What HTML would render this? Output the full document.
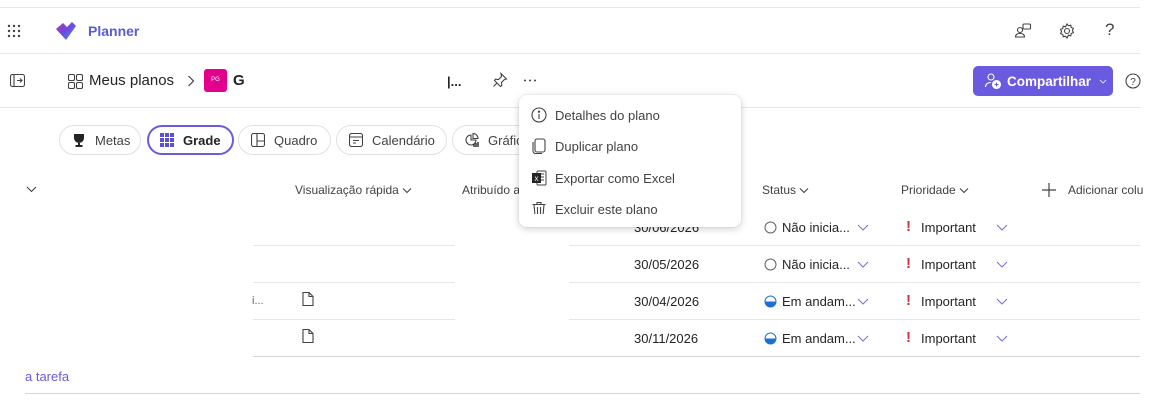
<!DOCTYPE html>
<html><head><meta charset="utf-8"><style>
*{margin:0;padding:0;box-sizing:border-box}
body{width:1165px;height:414px;background:#fff;font-family:"Liberation Sans",sans-serif;color:#242424;position:relative;overflow:hidden}
.a{position:absolute;white-space:nowrap}
.hl{position:absolute;height:1px;background:#e6e6e6}
.pill{position:absolute;top:125px;height:30px;border:1px solid #e0e0e0;border-radius:15px;font-size:13px;color:#424242;display:flex;align-items:center;padding-left:12px;gap:9px;background:#fff}
.hdr{font-size:12px;color:#424242}
.cell{font-size:13px;color:#242424}
.cv{display:inline-block;vertical-align:middle;margin-left:3px}
.menu{position:absolute;left:519px;top:95px;width:222px;height:132px;background:#fff;border-radius:8px;box-shadow:0 2px 8px rgba(0,0,0,.18),0 0 2px rgba(0,0,0,.1);overflow:hidden}
.mi{position:absolute;left:12px;font-size:13px;color:#424242;display:flex;align-items:center;gap:8px}
</style></head><body>
<div class="hl" style="left:0;top:7px;width:1140px"></div>
<div class="hl" style="left:0;top:53px;width:1140px"></div>
<div class="hl" style="left:0;top:107px;width:1140px"></div>
<svg class="a" style="left:7px;top:24px" width="14" height="14"><g fill="#424242"><circle cx="2" cy="2" r="1.2"/><circle cx="7" cy="2" r="1.2"/><circle cx="12" cy="2" r="1.2"/><circle cx="2" cy="7" r="1.2"/><circle cx="7" cy="7" r="1.2"/><circle cx="12" cy="7" r="1.2"/><circle cx="2" cy="12" r="1.2"/><circle cx="7" cy="12" r="1.2"/><circle cx="12" cy="12" r="1.2"/></g></svg>
<svg class="a" style="left:54px;top:20px" width="24" height="22"><defs><linearGradient id="g" x1="0" y1="0" x2="1" y2="1"><stop offset="0" stop-color="#b82fb8"/><stop offset=".5" stop-color="#6b4be0"/><stop offset="1" stop-color="#3a9ff0"/></linearGradient></defs><path d="M2 9 L9 3 L13 7 L18 2 L22 6 L12 20 Z" fill="url(#g)"/></svg>
<div class="a" style="left:88px;top:23px;font-size:14px;font-weight:bold;color:#5b5bd6">Planner</div>
<svg class="a" style="left:1014px;top:22px" width="18" height="18" fill="none" stroke="#424242" stroke-width="1.1"><circle cx="6" cy="8" r="2.5"/><path d="M1.5 15c0-2.5 2-3.5 4.5-3.5s4.5 1 4.5 3.5z"/><rect x="9" y="2" width="7.5" height="5" rx="1"/></svg>
<svg class="a" style="left:1058px;top:22px" width="18" height="18" fill="none" stroke="#424242" stroke-width="1.1"><circle cx="9" cy="9" r="2.5"/><path d="M9 2l1.5 1.8 2.3-.6.4 2.3 2.2.9-1 2.1 1 2.1-2.2.9-.4 2.3-2.3-.6L9 16l-1.5-1.8-2.3.6-.4-2.3-2.2-.9 1-2.1-1-2.1 2.2-.9.4-2.3 2.3.6z"/></svg>
<div class="a" style="left:1105px;top:20px;font-size:17px;color:#424242">?</div>
<svg class="a" style="left:10px;top:74px" width="15" height="13" fill="none" stroke="#424242" stroke-width="1.1"><rect x=".5" y=".5" width="14" height="12" rx="2"/><path d="M4 1v11M7 6.5h5M10 4.5l2 2-2 2"/></svg>
<svg class="a" style="left:68px;top:74px" width="15" height="15" fill="none" stroke="#424242" stroke-width="1.1"><rect x=".5" y=".5" width="6" height="6" rx="1.5"/><rect x="8.5" y=".5" width="6" height="6" rx="1.5"/><rect x=".5" y="8.5" width="6" height="6" rx="1.5"/><rect x="8.5" y="8.5" width="6" height="6" rx="1.5"/></svg>
<div class="a" style="left:89px;top:72px;font-size:15px;color:#242424">Meus planos</div>
<svg class="a" style="left:187px;top:75px" width="8" height="12" fill="none" stroke="#424242" stroke-width="1.2"><path d="M1.5 1l5 5-5 5"/></svg>
<div class="a" style="left:204px;top:69px;width:23px;height:23px;background:#e3008c;border-radius:3px;color:#fff;font-size:6px;line-height:23px;text-align:center">PG</div>
<div class="a" style="left:233px;top:72px;font-size:15px;font-weight:bold">G</div>
<div class="a" style="left:447px;top:74px;font-size:13px;font-weight:bold">|...</div>
<svg class="a" style="left:492px;top:72px" width="16" height="16" fill="none" stroke="#424242" stroke-width="1.1"><path d="M9 1.5l5.5 5.5-2 .5-3 3 .3 3-1.3 1-6-6 1-1.3 3 .3 3-3z M5 11l-3.5 3.5"/></svg>
<svg class="a" style="left:523px;top:79px" width="14" height="3" fill="#424242"><circle cx="2" cy="1.5" r="1"/><circle cx="7" cy="1.5" r="1"/><circle cx="12" cy="1.5" r="1"/></svg>
<div class="a" style="left:973px;top:66px;width:140px;height:30px;background:#6a5ae0;border-radius:5px;color:#fff;font-size:13.5px;font-weight:bold;display:flex;align-items:center;padding-left:11px;gap:5px"><svg width="18" height="18" fill="none" stroke="#fff" stroke-width="1.1"><circle cx="7" cy="5" r="3"/><path d="M1.5 15c0-3 2.5-4.5 5.5-4.5"/><circle cx="12.5" cy="12.5" r="4" fill="#fff"/><path d="M12.5 10.5v4M10.5 12.5h4" stroke="#6a5ae0"/></svg>Compartilhar<svg width="8" height="5" fill="none" stroke="#d8d4ff" style="margin-left:3px"><path d="M1 1l3 3 3-3"/></svg></div>
<svg class="a" style="left:1125px;top:73px" width="16" height="16" fill="none" stroke="#424242" stroke-width="1.1"><circle cx="8" cy="8" r="7"/><text x="8" y="12" font-size="10" text-anchor="middle" fill="#424242" stroke="none" font-family="Liberation Sans">?</text></svg>
<div class="pill" style="left:59px;width:82px"><svg width="14" height="15"><path d="M2 1h10v4a5 5 0 0 1-10 0z M6 10h2v2h2.5v2h-7v-2H6z" fill="#242424"/></svg>Metas</div>
<div class="pill" style="left:147px;width:87px;border:2px solid #6a5ae0;font-weight:bold;color:#242424;padding-left:11px"><svg width="14" height="14" fill="#5b4fd6"><rect x="0" y="0" width="4" height="4"/><rect x="5" y="0" width="4" height="4"/><rect x="10" y="0" width="4" height="4"/><rect x="0" y="5" width="4" height="4"/><rect x="5" y="5" width="4" height="4"/><rect x="10" y="5" width="4" height="4"/><rect x="0" y="10" width="4" height="4"/><rect x="5" y="10" width="4" height="4"/><rect x="10" y="10" width="4" height="4"/></svg>Grade</div>
<div class="pill" style="left:238px;width:93px"><svg width="14" height="14" fill="none" stroke="#424242" stroke-width="1.1"><rect x=".5" y=".5" width="13" height="13" rx="2"/><path d="M6 .5v13M6 8h7.5"/></svg>Quadro</div>
<div class="pill" style="left:336px;width:111px"><svg width="14" height="14" fill="none" stroke="#424242" stroke-width="1.1"><rect x=".5" y=".5" width="13" height="13" rx="2"/><path d="M.5 4h13M4 7.5h6M4 10h3"/></svg>Calendário</div>
<div class="pill" style="left:452px;width:110px"><svg width="14" height="15" fill="none" stroke="#424242" stroke-width="1.1"><path d="M6 2a5 5 0 1 0 5 5H6z M8 .5v5h5a5 5 0 0 0-5-5z"/><path d="M9 14v-3M11 14v-4M13 14v-5" stroke="#242424" stroke-width="1.4"/></svg>Gráfic</div>
<svg class="a" style="left:26px;top:186px" width="11" height="7" fill="none" stroke="#424242" stroke-width="1.1"><path d="M1 1l4.5 4.5L10 1"/></svg>
<div class="a hdr" style="left:295px;top:183px">Visualização rápida<svg class="cv" width="10" height="6" fill="none" stroke="#424242" stroke-width="1.1"><path d="M1 .5l4 4 4-4"/></svg></div>
<div class="a hdr" style="left:462px;top:183px">Atribuído a</div>
<div class="a hdr" style="left:762px;top:183px">Status<svg class="cv" width="10" height="6" fill="none" stroke="#424242" stroke-width="1.1"><path d="M1 .5l4 4 4-4"/></svg></div>
<div class="a hdr" style="left:901px;top:183px">Prioridade<svg class="cv" width="10" height="6" fill="none" stroke="#424242" stroke-width="1.1"><path d="M1 .5l4 4 4-4"/></svg></div>
<svg class="a" style="left:1042px;top:183px" width="14" height="14" stroke="#424242" stroke-width="1.2"><path d="M7 0v14M0 7h14"/></svg>
<div class="a hdr" style="left:1068px;top:183px">Adicionar colu</div>
<div class="hl" style="left:253px;top:245px;width:202px"></div><div class="hl" style="left:569px;top:245px;width:571px"></div>
<div class="hl" style="left:253px;top:282px;width:202px"></div><div class="hl" style="left:569px;top:282px;width:571px"></div>
<div class="hl" style="left:253px;top:319px;width:202px"></div><div class="hl" style="left:569px;top:319px;width:571px"></div>
<div class="hl" style="left:253px;top:356px;width:887px;background:#d6d6d6"></div>
<div class="hl" style="left:25px;top:393px;width:1115px;background:#d6d6d6"></div>
<div class="a cell" style="left:634px;top:220px">30/06/2026</div>
<div class="a cell" style="left:634px;top:257px">30/05/2026</div>
<div class="a cell" style="left:634px;top:294px">30/04/2026</div>
<div class="a cell" style="left:634px;top:331px">30/11/2026</div>
<div class="a" style="left:252px;top:295px;font-size:11px;color:#616161">i...</div>
<svg class="a" style="left:302px;top:292px" width="12" height="14" fill="none" stroke="#424242" stroke-width="1.1"><path d="M1 .5h6l4 4v9H1z M7 .5v4h4"/></svg>
<svg class="a" style="left:302px;top:329px" width="12" height="14" fill="none" stroke="#424242" stroke-width="1.1"><path d="M1 .5h6l4 4v9H1z M7 .5v4h4"/></svg>
<svg class="a" style="left:764px;top:221px" width="13" height="13"><circle cx="6.5" cy="6.5" r="5.5" fill="none" stroke="#616161"/></svg>
<div class="a cell" style="left:782px;top:220px">Não inicia...</div>
<svg class="a" style="left:764px;top:258px" width="13" height="13"><circle cx="6.5" cy="6.5" r="5.5" fill="none" stroke="#616161"/></svg>
<div class="a cell" style="left:782px;top:257px">Não inicia...</div>
<svg class="a" style="left:764px;top:295px" width="13" height="13"><circle cx="6.5" cy="6.5" r="5.5" fill="#fff" stroke="#1d6fd8"/><path d="M1 6.5h11a5.5 5.5 0 0 1-11 0z" fill="#1d6fd8"/></svg>
<div class="a cell" style="left:782px;top:294px">Em andam...</div>
<svg class="a" style="left:764px;top:332px" width="13" height="13"><circle cx="6.5" cy="6.5" r="5.5" fill="#fff" stroke="#1d6fd8"/><path d="M1 6.5h11a5.5 5.5 0 0 1-11 0z" fill="#1d6fd8"/></svg>
<div class="a cell" style="left:782px;top:331px">Em andam...</div>
<svg class="a" style="left:857px;top:224px" width="12" height="7" fill="none" stroke="#7b73d9" stroke-width="1.1"><path d="M1 1l5 5 5-5"/></svg>
<svg class="a" style="left:857px;top:261px" width="12" height="7" fill="none" stroke="#7b73d9" stroke-width="1.1"><path d="M1 1l5 5 5-5"/></svg>
<svg class="a" style="left:857px;top:298px" width="12" height="7" fill="none" stroke="#7b73d9" stroke-width="1.1"><path d="M1 1l5 5 5-5"/></svg>
<svg class="a" style="left:857px;top:335px" width="12" height="7" fill="none" stroke="#7b73d9" stroke-width="1.1"><path d="M1 1l5 5 5-5"/></svg>
<div class="a" style="left:906px;top:218px;color:#d13438;font-weight:bold;font-size:15px">!</div><div class="a cell" style="left:921px;top:220px">Important</div>
<div class="a" style="left:906px;top:255px;color:#d13438;font-weight:bold;font-size:15px">!</div><div class="a cell" style="left:921px;top:257px">Important</div>
<div class="a" style="left:906px;top:292px;color:#d13438;font-weight:bold;font-size:15px">!</div><div class="a cell" style="left:921px;top:294px">Important</div>
<div class="a" style="left:906px;top:329px;color:#d13438;font-weight:bold;font-size:15px">!</div><div class="a cell" style="left:921px;top:331px">Important</div>
<svg class="a" style="left:996px;top:224px" width="12" height="7" fill="none" stroke="#7b73d9" stroke-width="1.1"><path d="M1 1l5 5 5-5"/></svg>
<svg class="a" style="left:996px;top:261px" width="12" height="7" fill="none" stroke="#7b73d9" stroke-width="1.1"><path d="M1 1l5 5 5-5"/></svg>
<svg class="a" style="left:996px;top:298px" width="12" height="7" fill="none" stroke="#7b73d9" stroke-width="1.1"><path d="M1 1l5 5 5-5"/></svg>
<svg class="a" style="left:996px;top:335px" width="12" height="7" fill="none" stroke="#7b73d9" stroke-width="1.1"><path d="M1 1l5 5 5-5"/></svg>
<div class="a" style="left:25px;top:369px;font-size:13px;color:#6a5ae0">a tarefa</div>
<div class="menu">
 <div class="mi" style="top:12px"><svg width="16" height="16" fill="none" stroke="#424242" stroke-width="1.1"><circle cx="8" cy="8" r="7"/><path d="M8 7v5"/><circle cx="8" cy="4.7" r=".6" fill="#424242"/></svg>Detalhes do plano</div>
 <div class="mi" style="top:43px"><svg width="16" height="16" fill="none" stroke="#424242" stroke-width="1.1"><rect x="4" y="1" width="10" height="13" rx="2"/><path d="M2 4v9a2.5 2.5 0 0 0 2.5 2.5H11"/></svg>Duplicar plano</div>
 <div class="mi" style="top:75px"><svg width="16" height="16"><rect x="6" y="1" width="9" height="14" rx="1" fill="none" stroke="#424242"/><path d="M9 4h4M9 7h4M9 10h4" stroke="#424242"/><rect x="1" y="3" width="9" height="10" fill="#242424"/><text x="5.5" y="11" font-size="8" text-anchor="middle" fill="#fff" font-family="Liberation Sans">x</text></svg>Exportar como Excel</div>
 <div class="mi" style="top:106px"><svg width="16" height="16" fill="none" stroke="#424242" stroke-width="1.1"><path d="M1.5 3.5h13M6 3.5V1.5h4v2M3 3.5l1 11h8l1-11M6.5 6v7M9.5 6v7"/></svg>Excluir este plano</div>
 <div style="position:absolute;left:0;top:119px;width:222px;height:20px;background:#fff"></div>
</div>
</body></html>
